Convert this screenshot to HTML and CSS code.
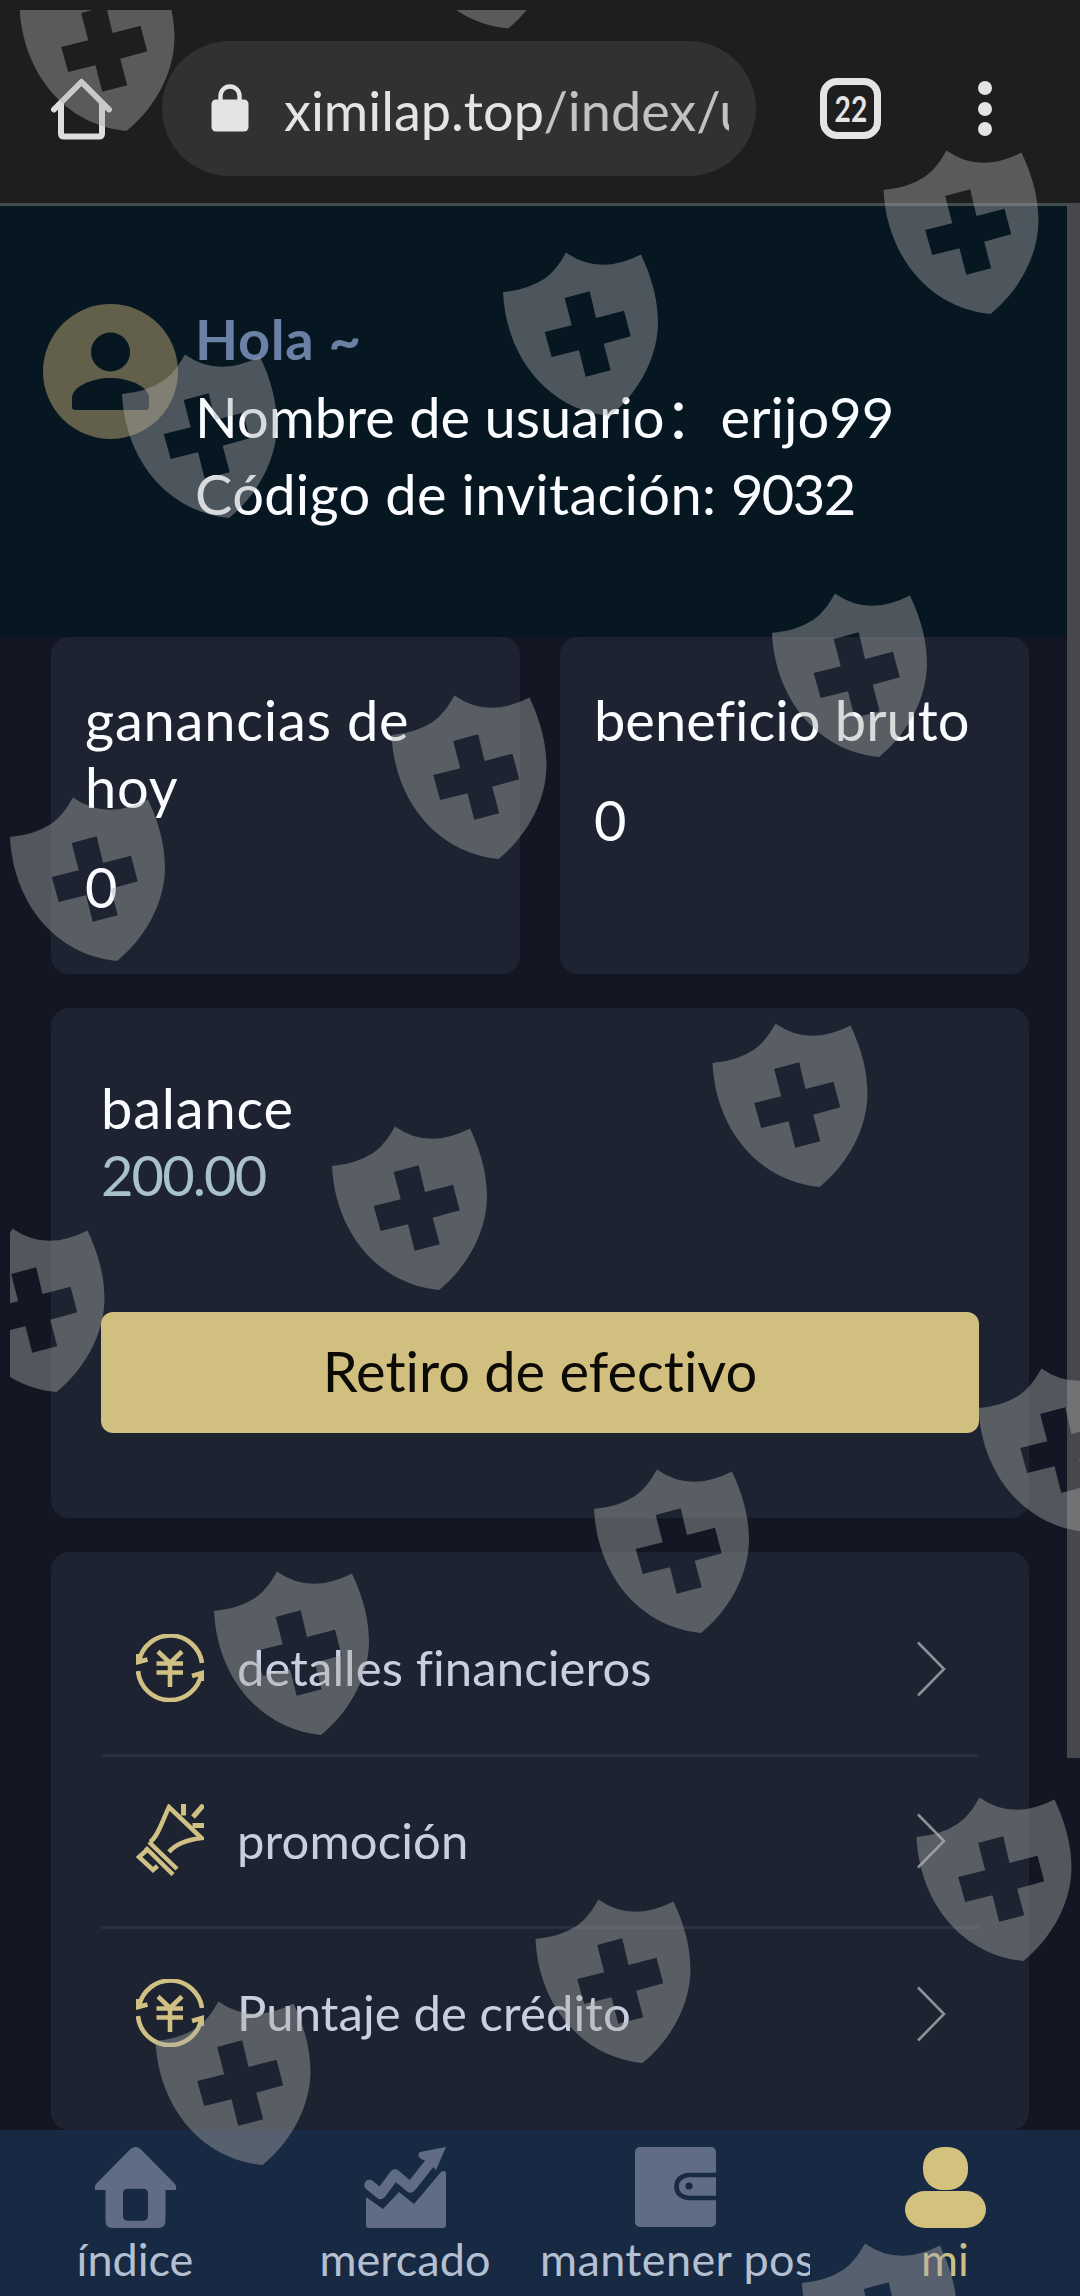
FILE: index.html
```html
<!DOCTYPE html>
<html lang="es">
<head>
<meta charset="utf-8">
<title>mi</title>
<link rel="stylesheet" href="styles.css">
</head>
<body>
<div class="screen">
  <header class="toolbar">
    <svg class="tb-home" width="62" height="62" viewBox="0 0 62 62" fill="none" stroke="#dedede" stroke-width="6" stroke-linecap="round" stroke-linejoin="round">
      <path d="M4 31.500 31.500 4 59 31.500"/><path d="M11 26V55.500Q11 58.500 14 58.500H49Q52 58.500 52 55.500V26"/>
    </svg>
    <div class="urlbar">
      <svg class="lock" width="38" height="48" viewBox="0 0 38 48"><rect x="0.500" y="15.500" width="37" height="32" rx="4.500" fill="#e4e4e4"/><path d="M9.500 17V12a9.500 9.500 0 0 1 19 0V17" fill="none" stroke="#e4e4e4" stroke-width="4.400"/></svg>
      <div class="url">ximilap.top<span class="path">/index/user</span></div>
    </div>
    <div class="tabs"><span>22</span></div>
    <div class="dots"><i></i><i></i><i></i></div>
  </header>

  <section class="profile">
    <svg class="avatar" width="135" height="135" viewBox="0 0 135 135"><circle cx="67.500" cy="67.500" r="67.500" fill="#625f4a"/><circle cx="67.500" cy="48" r="19.500" fill="#061722"/><path d="M29 103V94C29 82 50 74 67.500 74S106 82 106 94V103Q106 106 103 106H32Q29 106 29 103Z" fill="#061722"/></svg>
    <div class="who">
      <div class="hola">Hola ~</div>
      <div>Nombre de usuario<span class="colon">：</span>erijo99</div>
      <div class="code">Código de invitación: <span class="digits">9032</span></div>
    </div>
  </section>

  <main class="content">
    <div class="stats">
      <div class="card stat"><div class="wide">ganancias de hoy</div><div class="num">0</div></div>
      <div class="card stat"><div>beneficio bruto</div><div class="num">0</div></div>
    </div>
    <div class="card balance">
      <div class="wide">balance</div>
      <div class="amount">200.00</div>
      <div class="button">Retiro de efectivo</div>
    </div>
    <div class="card list">
      <div class="row">
        <svg class="ico" width="68" height="68" viewBox="0 0 68 68"><use href="#yen"/></svg>
        <span>detalles financieros</span>
        <svg class="chev" width="30" height="56" viewBox="0 0 30 56"><path d="M2 1.500 28 28 2 54.500"/></svg>
      </div>
      <div class="row">
        <svg class="ico" width="68" height="72" viewBox="0 0 68 72" fill="none" stroke="#d0c084" stroke-width="4.500"><path d="M14 38C22 33 27 15 33 3L65.500 34Q42 37 33 48M13 38 41 65M9.500 43.500 37 70.500M12 45 3 53 17 66 21.500 62"/><path d="M47.500 0V11.500M67.500 1 57 13M56.500 21.500H68" stroke-width="5"/></svg>
        <span>promoción</span>
        <svg class="chev" width="30" height="56" viewBox="0 0 30 56"><path d="M2 1.500 28 28 2 54.500"/></svg>
      </div>
      <div class="row">
        <svg class="ico" width="68" height="68" viewBox="0 0 68 68"><use href="#yen"/></svg>
        <span>Puntaje de crédito</span>
        <svg class="chev" width="30" height="56" viewBox="0 0 30 56"><path d="M2 1.500 28 28 2 54.500"/></svg>
      </div>
    </div>
  </main>

  <nav class="nav">
    <div class="tab">
      <svg width="81" height="81" viewBox="0 0 81 81" fill="#5f6c84"><path fill-rule="evenodd" d="M35.500 2Q40.500-2 45.500 2L79 36Q82 39 81 43H70.500V74Q70.500 81 63.500 81H17.500Q10.500 81 10.500 74V43H0Q-1 39 2 36ZM33 41.700Q28 41.700 28 46.700V68.700Q28 73.700 33 73.700H48Q53 73.700 53 68.700V46.700Q53 41.700 48 41.700Z"/></svg>
      <span>índice</span>
    </div>
    <div class="tab">
      <svg width="81" height="81" viewBox="0 0 81 81" fill="#5f6c84"><path d="M4.500 38 15.500 47 30 27.500 45.500 40.500 68 12" fill="none" stroke="#5f6c84" stroke-width="10.500" stroke-linecap="round" stroke-linejoin="round"/><path d="M55 5 81 0 71 23 64 15 56 12Q51 8 55 5Z"/><path d="M1 50 18 62 34 45 49 57 76 25Q81 22 81 27V78Q81 81 78 81H4Q1 81 1 78Z"/></svg>
      <span>mercado</span>
    </div>
    <div class="tab">
      <svg width="81" height="81" viewBox="0 0 81 81"><rect width="81" height="80" rx="5" fill="#5f6c84"/><path d="M81 28H53Q41.500 30 41.500 39.500T53 51H81" fill="none" stroke="#182943" stroke-width="4.600"/><circle cx="54" cy="39" r="3.600" fill="#182943"/></svg>
      <span class="clipped">mantener posición</span>
    </div>
    <div class="tab active">
      <svg width="81" height="81" viewBox="0 0 81 81" fill="#d3c27e"><rect x="18" y="0" width="45" height="43" rx="20"/><rect x="0" y="44" width="81" height="37" rx="20" ry="18.500"/></svg>
      <span>mi</span>
    </div>
  </nav>

  <div class="scrollbar"></div>

  <svg class="shields" width="1080" height="2296" viewBox="0 0 1080 2296">
    <defs>
      <g id="yen" fill="none" stroke="#d0c084" stroke-width="4.600"><path d="M3 27A32 32 0 0 1 66 29M65.500 39A32 32 0 0 1 2 37M2 20V28L11.500 25.500M66 47V39L56 42M22 17.500 34 29 46 17.500M20.500 29.500H47M20.500 38.500H47M34 28V53"/></g>
      <path id="shield" fill-rule="evenodd" d="M0 0Q24-2 41-13C51-20 57-29 63-39.500Q96-16 138-37.500C150-12 155 10 155 32C154 70 132 104 107 124C45 118 3 65 0 0ZM61.700 6 86.700-.7 93 26 121 18.700 127.700 44.300 100.700 51.700 107.700 78.300 82.700 84.700 76 58.300 48.700 65 41.700 40 68.700 33.300Z"/>
      <clipPath id="frame"><rect x="10" y="10" width="1070" height="2286"/></clipPath>
    </defs>
    <g clip-path="url(#frame)" fill="#adadad" fill-opacity=".425">
      <use href="#shield" x="19.500" y="7"/>
      <use href="#shield" x="401" y="-95.500"/>
      <use href="#shield" x="883.500" y="190"/>
      <use href="#shield" x="503" y="292"/>
      <use href="#shield" x="122" y="394"/>
      <use href="#shield" x="772" y="633"/>
      <use href="#shield" x="391.500" y="735"/>
      <use href="#shield" x="10" y="837"/>
      <use href="#shield" x="712.500" y="1063"/>
      <use href="#shield" x="332" y="1166"/>
      <use href="#shield" x="-50.500" y="1268"/>
      <use href="#shield" x="978.500" y="1408"/>
      <use href="#shield" x="594" y="1509"/>
      <use href="#shield" x="214" y="1611"/>
      <use href="#shield" x="916.500" y="1837"/>
      <use href="#shield" x="535.500" y="1939"/>
      <use href="#shield" x="155.500" y="2041"/>
      <use href="#shield" x="802" y="2283"/>
    </g>
  </svg>
</div>
</body>
</html>
```
FILE: styles.css
```css
* { box-sizing: border-box; }
body {
  margin: 0;
  background: #141723;
  color: #fafcff;
  font-family: Lato, "Noto Sans CJK SC", sans-serif;
  font-size: 56px;
  font-variant-ligatures: none;
}
svg { display: block; flex: none; overflow: visible; }
.screen {
  position: relative;
  width: 1080px;
  height: 2296px;
  overflow: hidden;
  display: flex;
  flex-direction: column;
}

/* browser toolbar */
.toolbar {
  flex: none;
  height: 203px;
  padding: 14px 0 0 50px;
  background: #1e1e1e;
  display: flex;
  align-items: center;
}
.urlbar {
  width: 594px;
  height: 135px;
  margin: 0 64px 0 50px;
  padding-left: 49px;
  border-radius: 68px;
  background: #313131;
  display: flex;
  align-items: center;
}
.lock { margin-top: -2px; }
.url {
  width: 445px;
  margin: 4px 0 0 35px;
  overflow: hidden;
  white-space: nowrap;
  font-size: 54px;
  line-height: 80px;
  color: #e4e4e4;
}
.path { color: #c2c2c2; }
.tabs {
  width: 61px;
  height: 61px;
  border: 7px solid #e4e4e4;
  border-radius: 17px;
  color: #e4e4e4;
  font-size: 36px;
  font-weight: 700;
  line-height: 46px;
  display: flex;
  justify-content: center;
}
.tabs span { transform: scaleX(.78); }
.dots {
  margin-left: 97px;
  display: flex;
  flex-direction: column;
  gap: 6.5px;
}
.dots i { width: 14px; height: 14px; border-radius: 50%; background: #e4e4e4; }

/* profile header */
.profile {
  flex: none;
  height: 434px;
  padding: 98px 0 0 43px;
  border-top: 3px solid #434c4e;
  background: #061722;
  display: flex;
}
.who { margin: -4px 0 0 17px; line-height: 77.5px; white-space: nowrap; }
.who > div { height: 77.5px; }
.hola { color: #6b80a5; font-weight: 700; letter-spacing: .6px; }
.colon { font-family: "Noto Sans CJK SC", sans-serif; line-height: 0; }
.code { letter-spacing: .3px; }
.digits { letter-spacing: -1.5px; }

/* cards */
.content {
  flex: 1;
  min-height: 0;
  padding: 0 51px;
  display: flex;
  flex-direction: column;
  gap: 34px;
}
.card { flex: none; border-radius: 18px; background: #1d2330; line-height: 67px; }
.stats { display: grid; grid-template-columns: 1fr 1fr; gap: 40px; }
.stat { height: 337px; padding: 49px 34px 0; }
.wide { letter-spacing: .8px; }
.num { margin-top: 33px; }
.balance { height: 510px; padding: 66px 50px 0; }
.amount { color: #a9c0cd; letter-spacing: -1.9px; }
.button {
  height: 121px;
  margin-top: 104px;
  border-radius: 12px;
  background: #d0bf7f;
  color: #0c0a06;
  line-height: 117px;
  text-align: center;
}
.list { height: 578px; padding: 32px 50px 0; }
.row {
  height: 172.5px;
  padding: 0 33px 0 35px;
  border-bottom: 3px solid #2a303e;
  display: flex;
  align-items: center;
  color: #c9cfe0;
  font-size: 49px;
}
.row:last-child { border-bottom-color: transparent; }
.ico { margin-top: -2px; overflow: hidden; }
.row span { flex: 1; margin: -2px 0 0 33px; letter-spacing: .1px; }
.chev { fill: none; stroke: #8d9098; stroke-width: 2.6; }

/* bottom navigation */
.nav {
  flex: none;
  height: 166px;
  background: #182943;
  display: grid;
  grid-template-columns: repeat(4, 270px);
  color: #b4c0d2;
  font-size: 45px;
}
.tab { padding-top: 17px; overflow: hidden; }
.tab svg { margin: 0 auto; }
.tab span { display: block; line-height: 62px; white-space: nowrap; text-align: center; }
.tab .clipped { letter-spacing: .4px; }
.tab.active { color: #cdbf84; }

/* layers above the page */
.scrollbar { position: absolute; top: 203px; right: 0; width: 13px; height: 1555px; background: #47484c; }
.shields { position: absolute; top: 0; left: 0; pointer-events: none; }
```
